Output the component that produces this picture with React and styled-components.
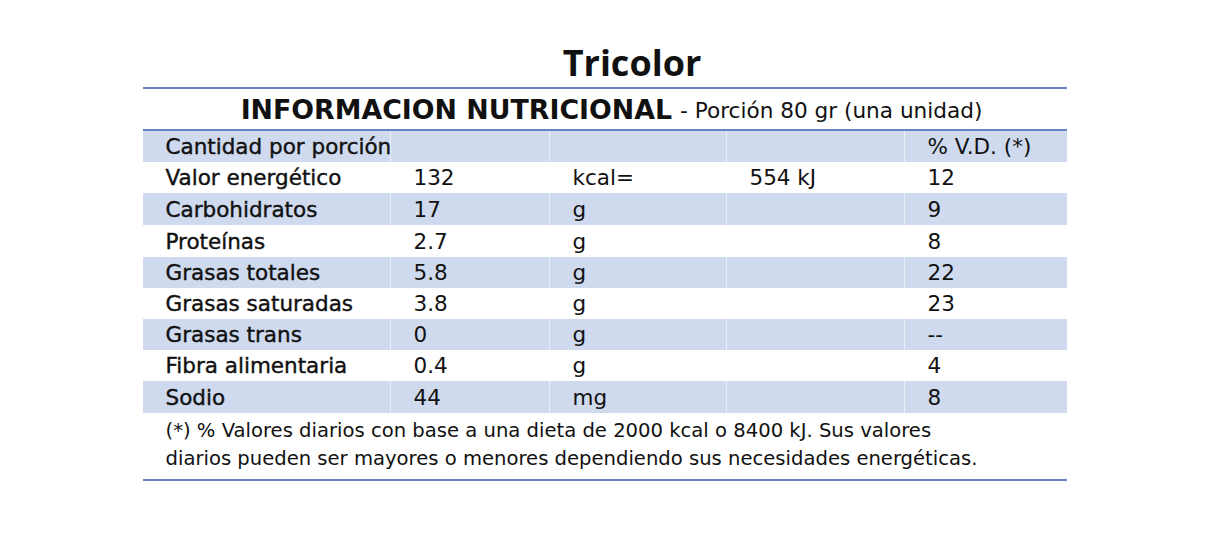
import styled, { createGlobalStyle } from 'styled-components';

const GlobalStyle = createGlobalStyle`
    body {
        margin: 0;
        background: #FFFFFF;
        font-family: "DejaVu Sans", "Open Sans", sans-serif;
        color: #111111;
    }
`;

const Page = styled.div`
    width: 1232px;
    height: 535px;
    display: flex;
    flex-direction: column;
    align-items: center;
    padding-top: 40px;
    box-sizing: border-box;
`;

const Title = styled.h1`
    margin: 0;
    font-family: "Open Sans", sans-serif;
    font-size: 36px;
    font-weight: 700;
    line-height: 46px;
    height: 47px;
    padding-left: 32px;
`;

const Panel = styled.div`
    width: 924px;
    margin-right: 23px;
    border-top: 2px solid #6483bf;
    border-bottom: 2px solid #6483bf;
`;

const Heading = styled.div`
    height: 40px;
    display: flex;
    align-items: center;
    justify-content: center;
    gap: 8px;
    padding-left: 14px;
    border-bottom: 2px solid #6483bf;
`;

const HeadingBold = styled.span`
    font-size: 26.8px;
    font-weight: 700;
`;

const HeadingLight = styled.span`
    font-size: 21.6px;
    font-weight: 400;
    padding-top: 3px;
`;

const Row = styled.div`
    display: grid;
    grid-template-columns: 247px 159px 177px 178px 163px;
    height: ${p => p.$h || 31}px;
    background: ${p => (p.$shaded ? '#cfdaee' : '#FFFFFF')};
`;

const Cell = styled.div`
    display: flex;
    align-items: center;
    padding-left: 23px;
    font-size: 21.5px;
    font-weight: 400;
    -webkit-text-stroke: ${p => (p.$bold ? '0.4px #111111' : '0')};
    border-left: ${p => (p.$first ? 'none' : '1px solid rgba(255,255,255,0.55)')};
    white-space: nowrap;
`;

const Note = styled.p`
    margin: 0;
    padding: 4px 0 6px 23px;
    font-size: 19.6px;
    line-height: 28px;
`;

const rows = [
    ['Valor energético', '132', 'kcal=', '554 kJ', '12'],
    ['Carbohidratos', '17', 'g', '', '9'],
    ['Proteínas', '2.7', 'g', '', '8'],
    ['Grasas totales', '5.8', 'g', '', '22'],
    ['Grasas saturadas', '3.8', 'g', '', '23'],
    ['Grasas trans', '0', 'g', '', '--'],
    ['Fibra alimentaria', '0.4', 'g', '', '4'],
    ['Sodio', '44', 'mg', '', '8'],
];

const heights = [31, 32, 32, 31, 31, 31, 31, 32];

export default function App() {
    return (
        <>
            <GlobalStyle />
            <Page>
                <Title>Tricolor</Title>
                <Panel>
                    <Heading>
                        <HeadingBold>INFORMACION NUTRICIONAL</HeadingBold>
                        <HeadingLight>- Porción 80 gr (una unidad)</HeadingLight>
                    </Heading>
                    <Row $shaded $h={31}>
                        <Cell $first $bold>Cantidad por porción</Cell>
                        <Cell />
                        <Cell />
                        <Cell />
                        <Cell>% V.D. (*)</Cell>
                    </Row>
                    {rows.map((r, i) => (
                        <Row key={r[0]} $shaded={i % 2 === 1} $h={heights[i]}>
                            <Cell $first $bold>{r[0]}</Cell>
                            <Cell>{r[1]}</Cell>
                            <Cell>{r[2]}</Cell>
                            <Cell>{r[3]}</Cell>
                            <Cell>{r[4]}</Cell>
                        </Row>
                    ))}
                    <Note>
                        (*) % Valores diarios con base a una dieta de 2000 kcal o 8400 kJ. Sus valores
                        <br />
                        diarios pueden ser mayores o menores dependiendo sus necesidades energéticas.
                    </Note>
                </Panel>
            </Page>
        </>
    );
}
